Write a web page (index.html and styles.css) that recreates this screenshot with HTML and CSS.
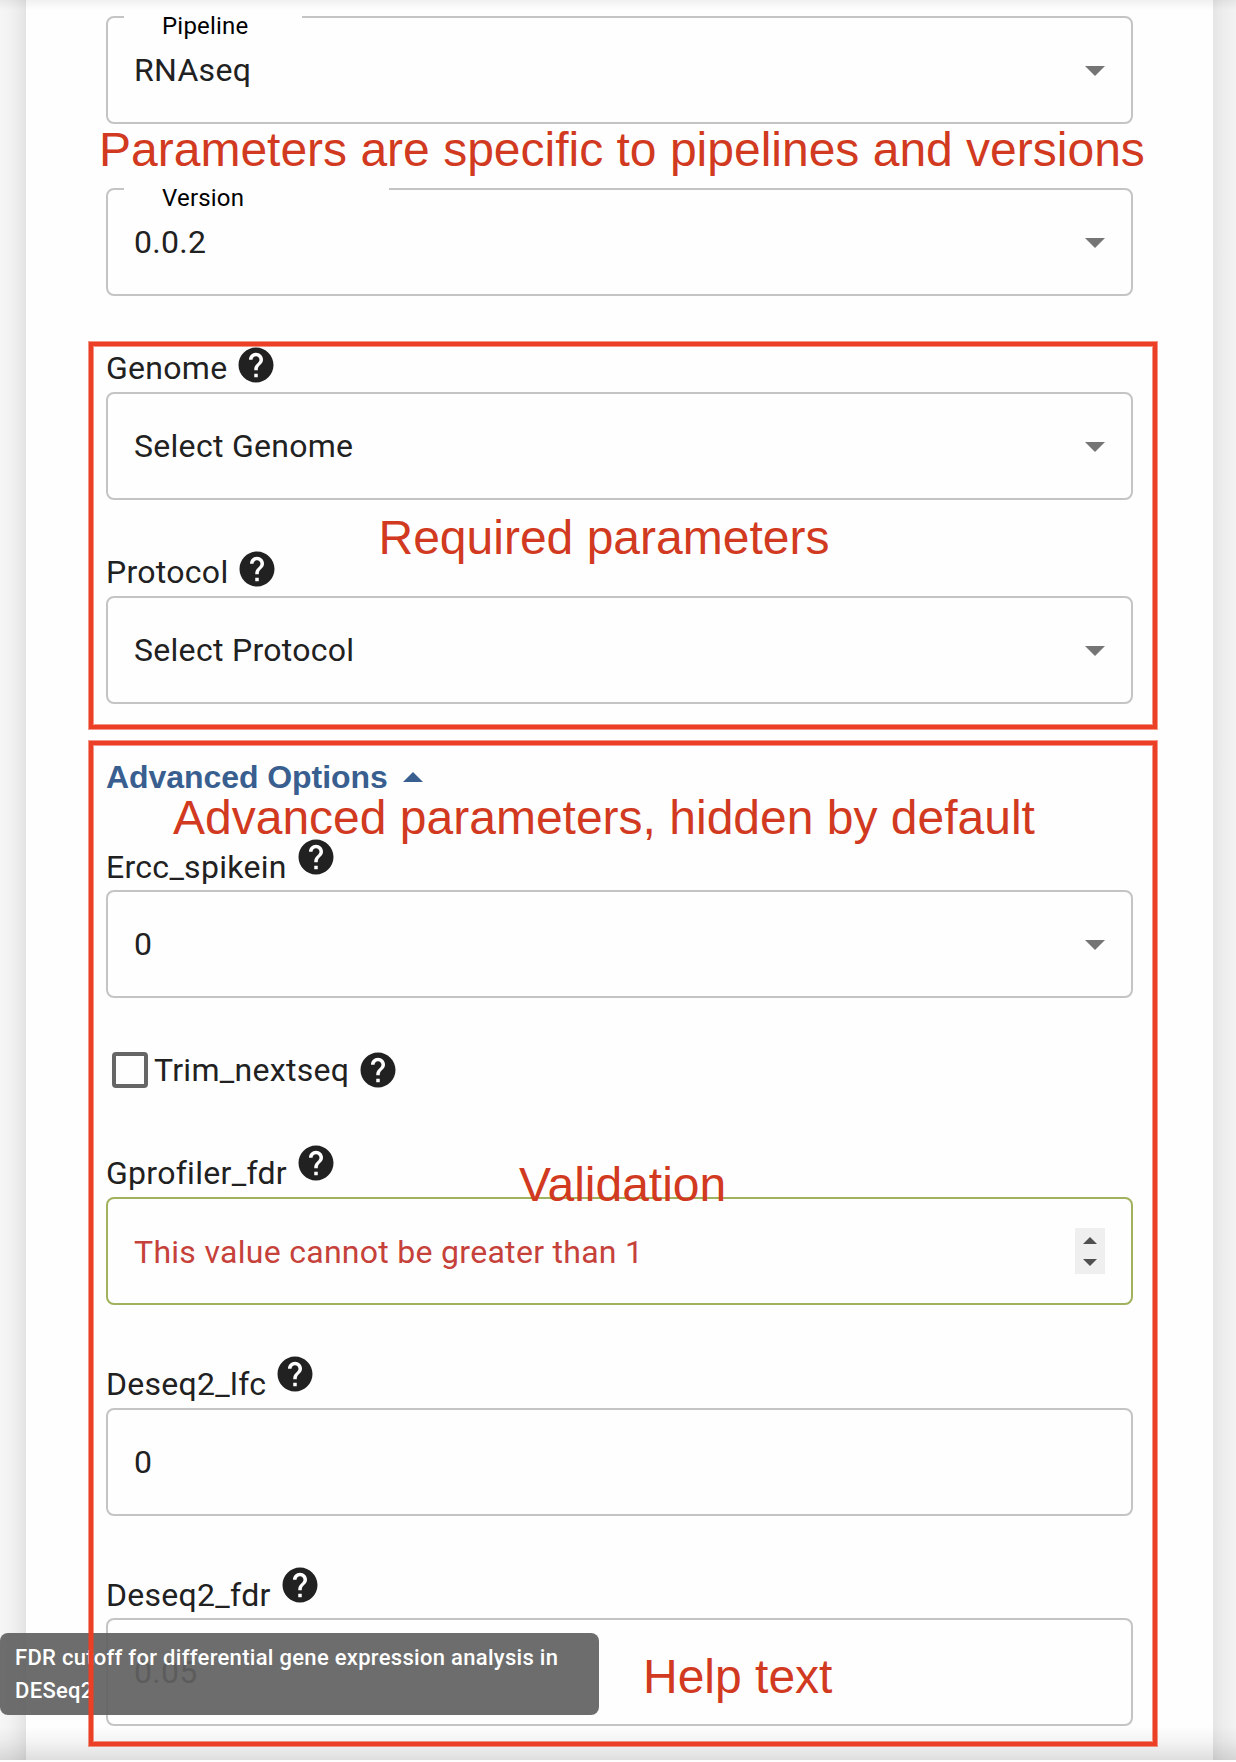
FILE: index.html
```html
<!DOCTYPE html>
<html lang="en">
<head>
<meta charset="utf-8">
<title>Pipeline parameters</title>
<link rel="stylesheet" href="styles.css">
</head>
<body>
<svg class="sprite" aria-hidden="true">
  <symbol id="help" viewBox="0 0 24 24"><path d="M12 2C6.48 2 2 6.48 2 12s4.48 10 10 10 10-4.48 10-10S17.52 2 12 2zm1 17h-2v-2h2v2zm2.07-7.75l-.9.92C13.45 12.9 13 13.5 13 15h-2v-.5c0-1.1.45-2.1 1.17-2.83l1.24-1.26c.37-.36.59-.86.59-1.41 0-1.1-.9-2-2-2s-2 .9-2 2H8c0-2.21 1.79-4 4-4s4 1.79 4 4c0 .88-.36 1.68-.93 2.25z"/></symbol>
  <symbol id="down" viewBox="0 0 20 10"><path d="M0 0h20L10 10z"/></symbol>
  <symbol id="up" viewBox="0 0 20 10"><path d="M0 10h20L10 0z"/></symbol>
</svg>
<div class="page">
  <main class="panel">
    <div class="box"><span class="legend">Pipeline</span><span class="value">RNAseq</span><svg class="arrow"><use href="#down"/></svg></div>
    <div class="box version"><span class="legend legend-wide">Version</span><span class="value">0.0.2</span><svg class="arrow"><use href="#down"/></svg></div>

    <section class="field">
      <div class="label"><span>Genome</span><svg class="help"><use href="#help"/></svg></div>
      <div class="box"><span class="value">Select Genome</span><svg class="arrow"><use href="#down"/></svg></div>
    </section>
    <section class="field">
      <div class="label"><span>Protocol</span><svg class="help"><use href="#help"/></svg></div>
      <div class="box"><span class="value">Select Protocol</span><svg class="arrow"><use href="#down"/></svg></div>
    </section>

    <div class="toggle"><span>Advanced Options</span><svg class="toggle-arrow"><use href="#up"/></svg></div>

    <section class="field first">
      <div class="label tall"><span>Ercc_spikein</span><svg class="help"><use href="#help"/></svg></div>
      <div class="box"><span class="value">0</span><svg class="arrow"><use href="#down"/></svg></div>
    </section>
    <div class="check-row"><span class="checkbox"></span><span class="check-text">Trim_nextseq</span><svg class="help"><use href="#help"/></svg></div>
    <section class="field after-check">
      <div class="label tall"><span>Gprofiler_fdr</span><svg class="help"><use href="#help"/></svg></div>
      <div class="box active"><span class="value error">This value cannot be greater than 1</span>
        <span class="spinner"><svg><use href="#up"/></svg><svg><use href="#down"/></svg></span></div>
    </section>
    <section class="field">
      <div class="label tall"><span>Deseq2_lfc</span><svg class="help"><use href="#help"/></svg></div>
      <div class="box"><span class="value">0</span></div>
    </section>
    <section class="field last">
      <div class="label tall"><span>Deseq2_fdr</span><svg class="help"><use href="#help"/></svg></div>
      <div class="box"><span class="value">0.05</span></div>
    </section>
  </main>

  <div class="fade-top"></div>
  <div class="fade-bottom"></div>
  <div class="tooltip">FDR cutoff for differential gene expression analysis in<br>DESeq2</div>

  <div class="frame frame-required"></div>
  <div class="frame frame-advanced"></div>
  <div class="note note-params">Parameters are specific to pipelines and versions</div>
  <div class="note note-required">Required parameters</div>
  <div class="note note-advanced">Advanced parameters, hidden by default</div>
  <div class="note note-validation">Validation</div>
  <div class="note note-help">Help text</div>
</div>
</body>
</html>
```
FILE: styles.css
```css
* { box-sizing: border-box; }

body {
  margin: 0;
  font-family: Roboto, sans-serif;
  font-size: 32px;
  line-height: 32px;
  letter-spacing: 0.29px;
  color: #212121;
}

.sprite { display: none; }

.page {
  position: relative;
  width: 1236px;
  height: 1762px;
  overflow: hidden;
  background:
    linear-gradient(to right, #f6f6f6 0, #f2f2f2 10px, #ececec 18px, #e3e3e3 26px) left / 26px 100% no-repeat,
    linear-gradient(to right, #e5e5e5 0, #ededed 10px, #f3f3f3 23px) right / 23px 100% no-repeat;
}

.panel {
  margin: 0 23px 0 26px;
  height: 1762px;
  padding: 16px 80px 0;
  background: #fefefe;
}

.box {
  position: relative;
  display: flex;
  justify-content: space-between;
  height: 108px;
  padding: 36px 26px 0;
  border: 2px solid #c4c4c4;
  border-radius: 8px;
}
.version { margin-top: 64px; }
.active { border-color: #a0b25d; }
.error { margin-top: 1px; color: #c5413a; }

.legend {
  position: absolute;
  left: 16px;
  top: -4px;
  width: 178px;
  padding-left: 38px;
  background: #fefefe;
  color: #000;
  font-size: 24px;
  line-height: 24px;
  letter-spacing: 0.2px;
}
.legend-wide { width: 265px; }

.arrow { width: 20px; height: 10px; margin-top: 12px; fill: #757575; }

.field { margin-top: 48px; }
.first { margin-top: 42px; }
.after-check { margin-top: 51px; }
.last { margin-top: 47px; }

.label {
  display: flex;
  align-items: flex-start;
  gap: 7.6px;
  height: 48px;
}
.label span { margin-top: 8px; }
.tall { gap: 8px; height: 55px; }
.tall span { margin-top: 15px; }
.first .tall span, .last .tall span { margin-top: 16px; }
.first .help, .last .help { margin-top: 0.5px; }

.help { width: 42px; height: 42px; fill: #212121; flex: none; }

.toggle {
  display: flex;
  gap: 15px;
  margin-top: 57px;
  font-family: "Liberation Sans", sans-serif;
  font-weight: bold;
  letter-spacing: -0.06px;
  color: #385f8f;
}
.toggle-arrow { width: 20px; height: 10px; margin-top: 11px; fill: #385f8f; }

.check-row {
  display: flex;
  align-items: center;
  height: 42px;
  margin: 51px 0 0 6px;
}
.checkbox { width: 36px; height: 36px; border: 4px solid #666; border-radius: 4px; }
.check-text { margin: 0 8px 0 6px; }

.spinner {
  display: flex;
  flex-direction: column;
  align-items: center;
  justify-content: space-between;
  width: 30px;
  height: 46px;
  margin-top: -7px;
  padding: 9px 0 8px;
  background: #efefef;
}
.spinner svg { width: 14px; height: 7px; fill: #505050; }

.fade-top {
  position: absolute;
  inset: 0 0 auto;
  height: 10px;
  background: linear-gradient(rgba(0,0,0,.055), rgba(0,0,0,0));
}
.fade-bottom {
  position: absolute;
  inset: auto 0 0;
  height: 36px;
  border-bottom: 2px solid #fefefe;
  background: linear-gradient(rgba(0,0,0,0), rgba(0,0,0,.04) 45%, rgba(0,0,0,.125));
}

.tooltip {
  position: absolute;
  left: 0;
  top: 1633px;
  width: 599px;
  height: 82px;
  padding: 8px 14px 8px 15px;
  border-radius: 8px;
  background: rgba(97,97,97,.924);
  color: #fff;
  font-size: 22px;
  font-weight: 500;
  line-height: 33px;
  letter-spacing: 0.3px;
  white-space: nowrap;
}

.frame {
  position: absolute;
  left: 88px;
  width: 1070px;
  border: 1px solid rgba(235,64,37,.55);
  box-shadow: inset 0 0 0 4px #eb4025, inset 0 0 0 5px rgba(235,64,37,.55);
}
.frame-required { top: 341px; height: 389px; }
.frame-advanced { top: 740px; height: 1007px; }

.note {
  position: absolute;
  font-family: "Liberation Sans", sans-serif;
  font-size: 48px;
  line-height: 48px;
  letter-spacing: 0;
  color: #d13a20;
  white-space: nowrap;
}
.note-params { left: 99px; top: 126px; }
.note-required { left: 378.5px; top: 514px; }
.note-advanced { left: 173px; top: 794px; }
.note-validation { left: 519px; top: 1161px; }
.note-help { left: 643px; top: 1653px; }
```
